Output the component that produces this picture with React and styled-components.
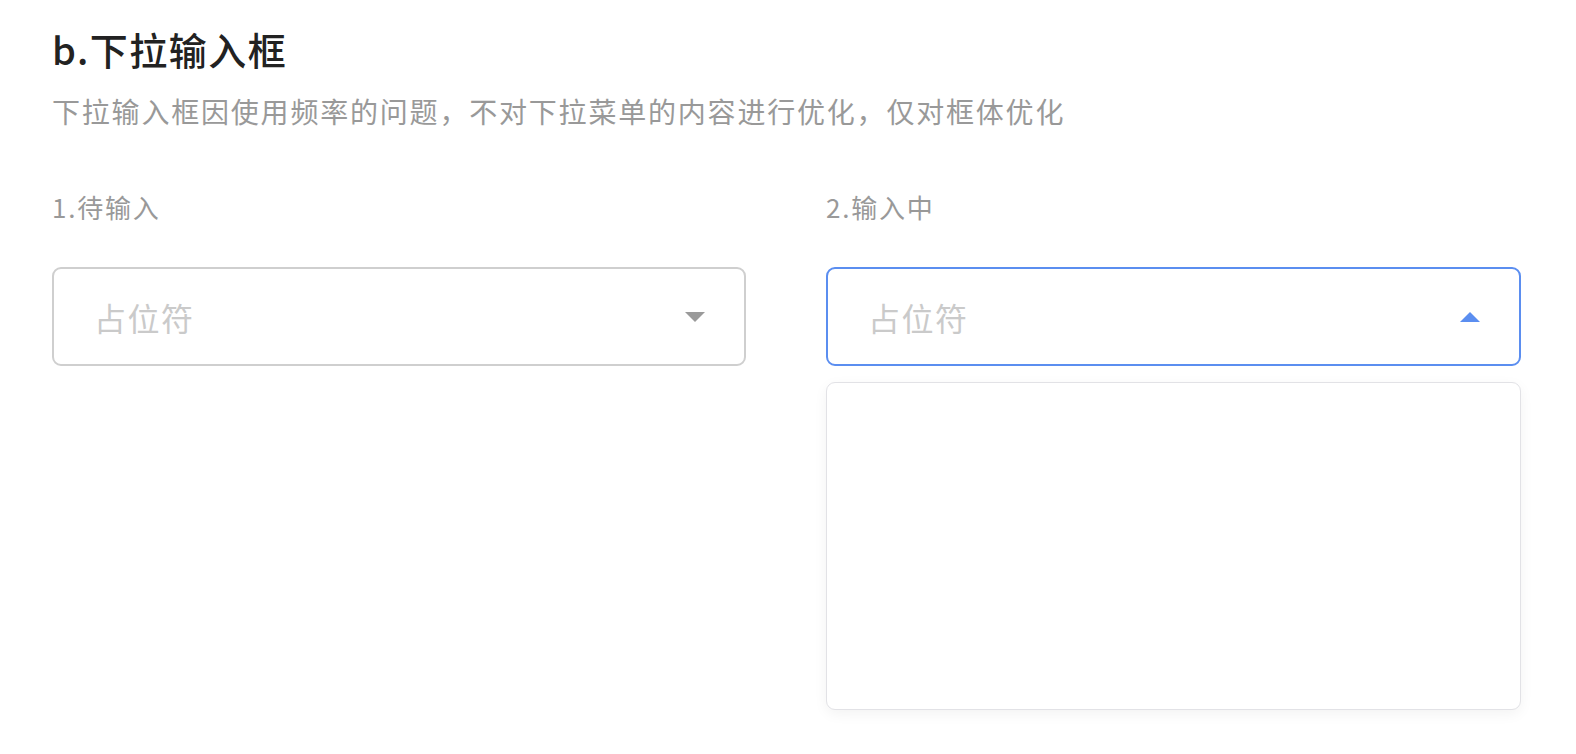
import React from 'react';
import styled, { createGlobalStyle } from 'styled-components';

const GlobalStyle = createGlobalStyle`
  body {
    margin: 0;
    background: #fff;
    font-family: "Noto Sans CJK SC", "Noto Sans", sans-serif;
  }
`;

/* whole page, padded like the spec sheet */
const Page = styled.div`
  padding: 23px 55px 0 52px;
  width: 1576px;
  height: 754px;
  box-sizing: border-box;
  overflow: hidden;
`;

const Title = styled.h2`
  margin: 0;
  font-size: 38px;
  line-height: 52px;
  font-weight: 500;
  color: #222;
  letter-spacing: 1.5px;
`;

const Desc = styled.p`
  margin: 16px 0 0;
  font-size: 28px;
  line-height: 40px;
  color: #999;
  letter-spacing: 1.8px;
`;

const Columns = styled.div`
  display: grid;
  grid-template-columns: 694px 695px;
  column-gap: 80px;
  margin-top: 58px;
  align-items: start;
`;

const Column = styled.div`
  display: flex;
  flex-direction: column;
`;

const Label = styled.div`
  font-size: 26px;
  line-height: 36px;
  color: #999;
  letter-spacing: 1.8px;
`;

const SelectBox = styled.div`
  margin-top: 42px;
  height: 99px;
  box-sizing: border-box;
  border: 2px solid ${(props) => (props.active ? '#5b8ef0' : '#cfcfcf')};
  border-radius: 9px;
  display: flex;
  align-items: center;
  justify-content: space-between;
  padding: 0 39px 0 40px;
`;

const Placeholder = styled.span`
  font-size: 32px;
  color: #cacaca;
  letter-spacing: 1.5px;
`;

/* small filled triangle, flips when open */
const Caret = styled.span`
  width: 0;
  height: 0;
  border-left: 10px solid transparent;
  border-right: 10px solid transparent;
  ${(props) =>
    props.up
      ? 'border-bottom: 10px solid #5b8ef0;'
      : 'border-top: 10px solid #9a9a9a;'}
`;

const Menu = styled.div`
  margin-top: 16px;
  height: 328px;
  box-sizing: border-box;
  border: 1px solid #e2e2e6;
  border-radius: 9px;
  background: #fff;
  box-shadow: 0 4px 14px rgba(0, 0, 0, 0.05);
`;

function Dropdown({ label, open }) {
  return (
    <Column>
      <Label>{label}</Label>
      <SelectBox active={open}>
        <Placeholder>占位符</Placeholder>
        <Caret up={open} />
      </SelectBox>
      {open && <Menu />}
    </Column>
  );
}

export default function App() {
  return (
    <>
      <GlobalStyle />
      <Page>
        <Title>b.下拉输入框</Title>
        <Desc>下拉输入框因使用频率的问题，不对下拉菜单的内容进行优化，仅对框体优化</Desc>
        <Columns>
          <Dropdown label="1.待输入" />
          <Dropdown label="2.输入中" open />
        </Columns>
      </Page>
    </>
  );
}
